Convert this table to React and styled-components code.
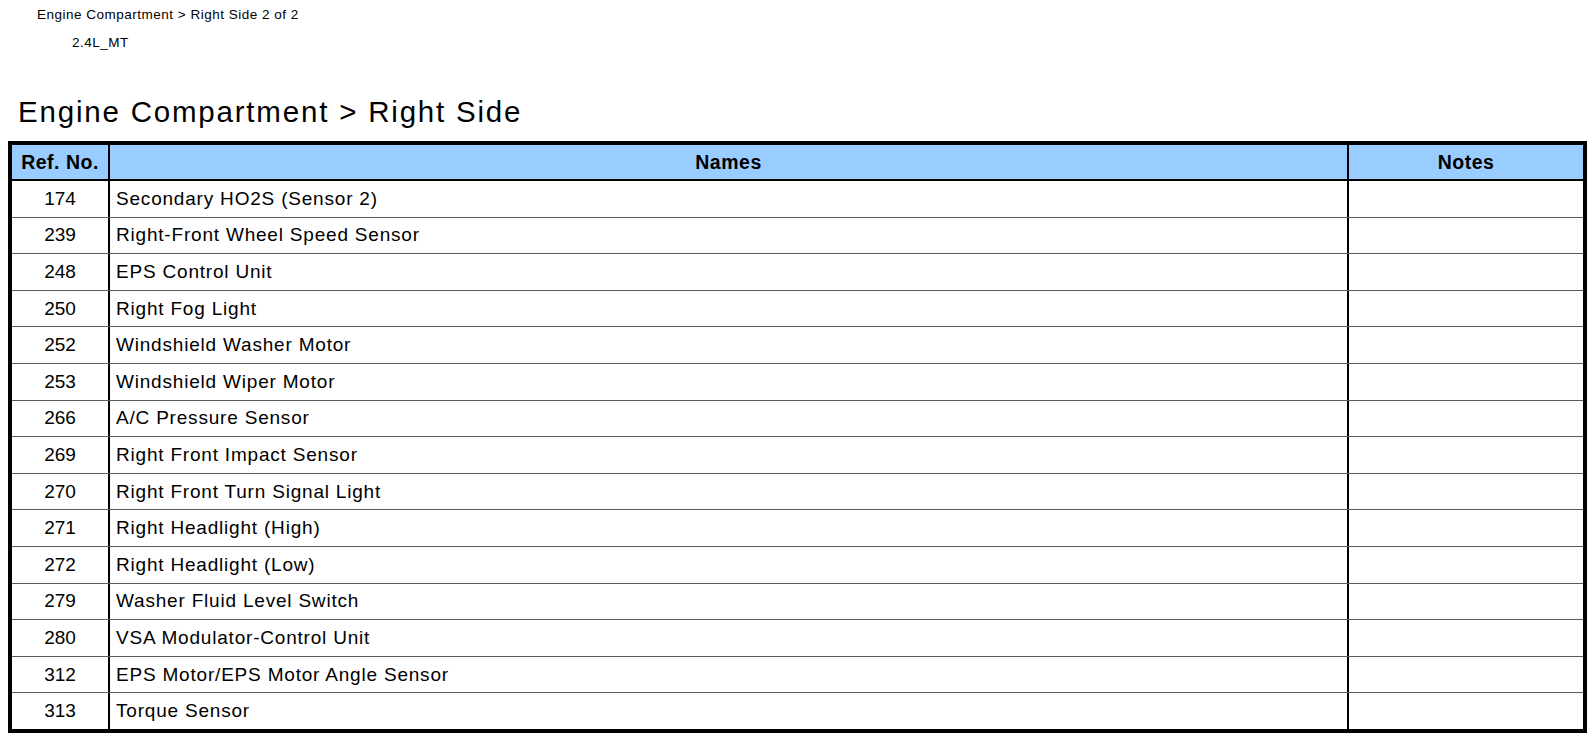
import React from 'react'
import styled, { createGlobalStyle } from 'styled-components'

const GlobalStyle = createGlobalStyle`
  html, body {
    margin: 0;
    padding: 0;
    background: #fff;
  }
  body {
    font-family: 'Liberation Sans', Arial, Helvetica, sans-serif;
    color: #000;
  }
`

const parts = [
  ['174', 'Secondary HO2S (Sensor 2)'],
  ['239', 'Right-Front Wheel Speed Sensor'],
  ['248', 'EPS Control Unit'],
  ['250', 'Right Fog Light'],
  ['252', 'Windshield Washer Motor'],
  ['253', 'Windshield Wiper Motor'],
  ['266', 'A/C Pressure Sensor'],
  ['269', 'Right Front Impact Sensor'],
  ['270', 'Right Front Turn Signal Light'],
  ['271', 'Right Headlight (High)'],
  ['272', 'Right Headlight (Low)'],
  ['279', 'Washer Fluid Level Switch'],
  ['280', 'VSA Modulator-Control Unit'],
  ['312', 'EPS Motor/EPS Motor Angle Sensor'],
  ['313', 'Torque Sensor'],
]

const Page = styled.div`
  width: 1595px;
  height: 743px;
  box-sizing: border-box;
  padding: 7px 8px 0 8px;
  overflow: hidden;
`

const RunningHead = styled.div`
  font-size: 13.5px;
  line-height: 16px;
  letter-spacing: 0.5px;
  padding-left: ${p => p.$indent}px;
  margin-top: ${p => p.$gap || 0}px;
`

const Title = styled.h1`
  margin: 44px 0 0 0;
  padding-left: 10px;
  font-size: 29.5px;
  line-height: 34px;
  font-weight: normal;
  letter-spacing: 1.8px;
`

const Table = styled.div`
  margin-top: 12px;
  width: 1579px;
  box-sizing: border-box;
  border: 4px solid #000;
`

const columns = '96px 1fr 236px'

const HeadRow = styled.div`
  display: grid;
  grid-template-columns: ${columns};
  height: 34px;
  background: #99ccff;
  border-bottom: 2px solid #000;
`

const Body = styled.div`
  height: 548px;
  display: flex;
  flex-direction: column;
`

const Row = styled.div`
  flex: 1 1 0;
  display: grid;
  grid-template-columns: ${columns};
  & + & {
    border-top: 1px solid #5a5a5a;
  }
`

const Cell = styled.div`
  display: flex;
  align-items: center;
  justify-content: ${p => (p.$align === 'left' ? 'flex-start' : 'center')};
  padding: 0 6px;
  font-size: ${p => (p.$head ? '19.5px' : '19px')};
  font-weight: ${p => (p.$head ? 'bold' : 'normal')};
  letter-spacing: ${p => (p.$head ? '0.5px' : p.$align === 'left' ? '0.8px' : '0')};
  white-space: nowrap;
  & + & {
    border-left: 2px solid #000;
  }
`

export default function App () {
  return (
    <Page>
      <GlobalStyle />
      <RunningHead $indent={29}>Engine Compartment &gt; Right Side 2 of 2</RunningHead>
      <RunningHead $indent={64} $gap={12}>2.4L_MT</RunningHead>
      <Title>Engine Compartment &gt; Right Side</Title>
      <Table>
        <HeadRow>
          <Cell $head>Ref. No.</Cell>
          <Cell $head>Names</Cell>
          <Cell $head>Notes</Cell>
        </HeadRow>
        <Body>
          {parts.map(([ref, name]) => (
            <Row key={ref}>
              <Cell>{ref}</Cell>
              <Cell $align='left'>{name}</Cell>
              <Cell />
            </Row>
          ))}
        </Body>
      </Table>
    </Page>
  )
}
